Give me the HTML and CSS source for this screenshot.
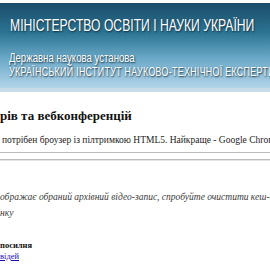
FILE: index.html
```html
<!DOCTYPE html>
<html lang="uk">
<head>
  <meta charset="UTF-8">
  <meta name="viewport" content="width=device-width, initial-scale=1.0">
  <title>Архів семінарів та вебконференцій</title>
  <link rel="stylesheet" href="styles.css">
</head>
<body>
  <header class="banner">
    <div class="ministry">МІНІСТЕРСТВО ОСВІТИ І НАУКИ УКРАЇНИ</div>
    <div class="org">
      <div>Державна наукова установа</div>
      <div class="org-name">УКРАЇНСЬКИЙ ІНСТИТУТ НАУКОВО-ТЕХНІЧНОЇ ЕКСПЕРТИЗИ ТА ІНФОРМАЦІЇ</div>
    </div>
  </header>
  <div class="banner-edge"></div>

  <main class="content">
    <h2 class="title">рів та вебконференцій</h2>
    <p class="note">потрібен броузер із пілтримкою HTML5. Найкраще - Google Chrome</p>
    <div class="rule"></div>
    <hr>

    <p class="hint">ображає обраний архівний відео-запис, спробуйте очистити кеш-файли<br>нку</p>

    <div class="links">
      <b>посилня</b><br>
      <a href="#">відей</a>
    </div>
  </main>
</body>
</html>
```

FILE: styles.css
```css
body {
  margin: 0;
  font-family: "Liberation Serif", serif;
  background: #fff;
  color: #111;
  overflow: hidden;
  white-space: nowrap;
}

.banner {
  margin-top: 3px;
  height: 85px;
  background: linear-gradient(#1a4c69, #2c7493 35%, #6aa8c7 65%, #b2d5ea);
  color: #fff;
  font-family: "Liberation Sans", sans-serif;
  text-shadow: 1px 1px 2px #0d2a3a;
  padding-left: 10px;
  overflow: hidden;
}

/* the banner font is a narrow face, squeeze the regular one */
.ministry,
.org {
  transform-origin: left top;
}

.ministry {
  padding-top: 13px;
  font-size: 16px;
  line-height: 20px;
  transform: scaleX(0.76);
}

.org {
  margin-top: 15px;
  margin-left: -1px;
  font-size: 13px;
  line-height: 14px;
  transform: scaleX(0.74);
}

.org-name {
  font-size: 12px;
  letter-spacing: 0.4px;
}

.banner-edge {
  height: 4px;
  background: #c9dbe7;
}

.content {
  padding-top: 15px;
}

.title {
  margin: 0;
  font-size: 13px;
  line-height: 18px;
}

.note {
  margin: 9px 0 0 2px;
  font-size: 9.5px;
  line-height: 12px;
  color: #222;
}

.rule {
  height: 1px;
  background: #bbb;
  margin-top: 6px;
}

hr {
  margin: 6px 0 0;
  border: 0;
  border-top: 1px solid #bdbdbd;
  border-bottom: 1px solid #e4e4e4;
}

.hint {
  margin: 28px 0 0;
  font-size: 9.5px;
  line-height: 16px;
  font-style: italic;
  color: #3a3a3a;
}

.links {
  margin-top: 19px;
  font-size: 8.5px;
  line-height: 11px;
}

.links a {
  color: #1a0dab;
}
```
